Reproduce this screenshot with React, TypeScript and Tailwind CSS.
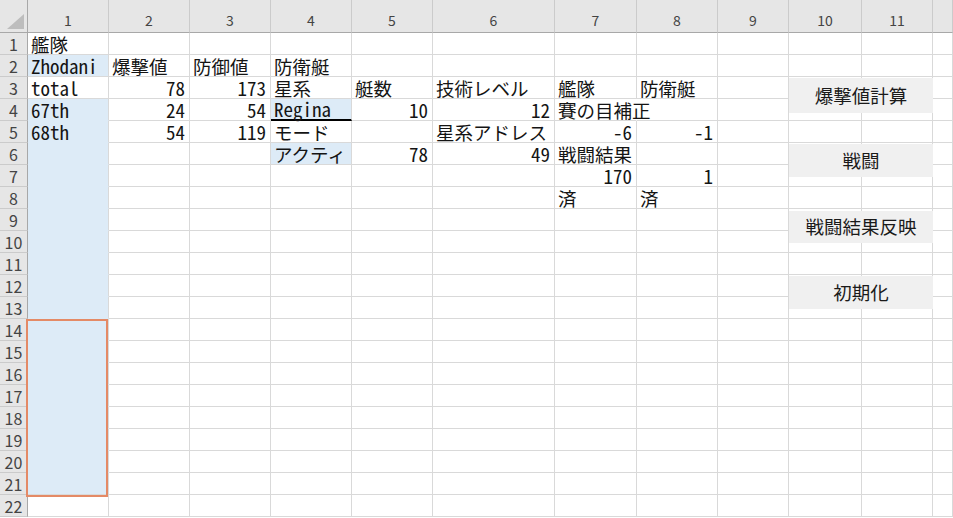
import React from "react";

type Cell = {
  t: string;
  num?: boolean;
  jp?: boolean;
  blue?: boolean;
  under?: boolean;
  spill?: boolean;
};

const COLS = 12;
const ROWS = 22;

// sheet contents, keyed "row,col"
const cells: Record<string, Cell> = {
  "1,1": { t: "艦隊", jp: true },
  "2,1": { t: "Zhodani" },
  "2,2": { t: "爆撃値", jp: true },
  "2,3": { t: "防御値", jp: true },
  "2,4": { t: "防衛艇", jp: true },
  "3,1": { t: "total" },
  "3,2": { t: "78", num: true },
  "3,3": { t: "173", num: true },
  "3,4": { t: "星系", jp: true },
  "3,5": { t: "艇数", jp: true },
  "3,6": { t: "技術レベル", jp: true },
  "3,7": { t: "艦隊", jp: true },
  "3,8": { t: "防衛艇", jp: true },
  "4,1": { t: "67th" },
  "4,2": { t: "24", num: true },
  "4,3": { t: "54", num: true },
  "4,4": { t: "Regina", blue: true, under: true },
  "4,5": { t: "10", num: true },
  "4,6": { t: "12", num: true },
  "4,7": { t: "賽の目補正", jp: true, spill: true },
  "5,1": { t: "68th" },
  "5,2": { t: "54", num: true },
  "5,3": { t: "119", num: true },
  "5,4": { t: "モード", jp: true },
  "5,6": { t: "星系アドレス", jp: true },
  "5,7": { t: "-6", num: true },
  "5,8": { t: "-1", num: true },
  "6,4": { t: "アクティ", jp: true, blue: true },
  "6,5": { t: "78", num: true },
  "6,6": { t: "49", num: true },
  "6,7": { t: "戦闘結果", jp: true },
  "7,7": { t: "170", num: true },
  "7,8": { t: "1", num: true },
  "8,7": { t: "済", jp: true },
  "8,8": { t: "済", jp: true },
};

const buttons = [
  { label: "爆撃値計算", top: "top-[78px]", h: "h-[35px]" },
  { label: "戦闘", top: "top-[144px]", h: "h-[33px]" },
  { label: "戦闘結果反映", top: "top-[211px]", h: "h-[32px]" },
  { label: "初期化", top: "top-[276px]", h: "h-[33px]" },
];

// column 1 is filled light blue on rows 2 and 4..21
const isBlueCol1 = (r: number, c: number) => c === 1 && r >= 2 && r <= 21 && r !== 3;

function getCell(r: number, c: number): Cell | undefined {
  const cell = cells[`${r},${c}`];
  if (isBlueCol1(r, c)) return { t: "", ...cell, blue: true };
  return cell;
}

function SheetCell({ r, c }: { r: number; c: number }) {
  const cell = getCell(r, c);
  const blueJoin = isBlueCol1(r, c) && isBlueCol1(r + 1, c);

  return (
    <div
      className={[
        "relative flex items-end whitespace-nowrap border-r border-b",
        cell?.spill ? "border-r-transparent z-10" : "border-r-[#d9d9d9]",
        blueJoin ? "border-b-[#ddebf7]" : "border-b-[#d9d9d9]",
        cell?.under ? "border-b-2 border-b-black" : "",
        cell?.blue ? "bg-[#ddebf7]" : "",
        cell?.num ? "justify-end pr-[4px]" : "pl-[3px]",
      ].join(" ")}
    >
      {cell && cell.t && (
        <span
          className={
            cell.jp
              ? "font-['Noto_Sans_CJK_JP',sans-serif] text-[18.5px] leading-[20px] text-[#141414]"
              : "font-['Noto_Sans_CJK_JP',sans-serif] text-[19px] leading-[20px] text-[#141414] [font-feature-settings:'hwid']"
          }
        >
          {cell.t}
        </span>
      )}
    </div>
  );
}

export default function App() {
  const rows = Array.from({ length: ROWS }, (_, i) => i + 1);
  const cols = Array.from({ length: COLS }, (_, i) => i + 1);

  return (
    <div className="relative w-[953px] h-[518px] overflow-hidden bg-white">
      <div className="grid grid-cols-[28px_81px_81px_81px_81px_81px_122px_82px_81px_71px_73px_71px_1fr] grid-rows-[33px_repeat(22,22px)]">
        {/* corner */}
        <div className="relative bg-[#e6e6e6] border-r border-b border-[#a8a8a8]">
          <svg className="absolute right-[3px] bottom-[3px]" width="17" height="15" viewBox="0 0 17 15">
            <polygon points="17,0 17,15 0,15" fill="#bdbdbd" />
          </svg>
        </div>
        {/* column headers */}
        {cols.map((c) => (
          <div
            key={`h${c}`}
            className="flex items-center justify-center pt-[9px] bg-[#e6e6e6] border-r border-r-[#cbcbcb] border-b border-b-[#a8a8a8] font-['Noto_Sans_CJK_JP',sans-serif] text-[14px] text-[#444]"
          >
            {c <= 11 ? c : ""}
          </div>
        ))}
        {rows.map((r) => (
          <React.Fragment key={r}>
            <div className="flex items-center justify-center bg-[#e6e6e6] border-r border-r-[#a8a8a8] border-b border-b-[#cbcbcb] font-['Noto_Sans_CJK_JP',sans-serif] text-[16px] leading-none text-[#444]">
              {r}
            </div>
            {cols.map((c) => (
              <SheetCell key={c} r={r} c={c} />
            ))}
          </React.Fragment>
        ))}
      </div>

      {/* selection range */}
      <div className="absolute left-[26px] top-[319px] w-[82px] h-[178px] border-2 border-[#e48a66] pointer-events-none" />

      {/* macro buttons placed on the sheet */}
      {buttons.map((b) => (
        <div
          key={b.label}
          className={`absolute left-[789px] w-[144px] ${b.top} ${b.h} flex items-center justify-center bg-[#f0f0f0] font-['Noto_Sans_CJK_JP',sans-serif] text-[18.5px] text-[#1a1a1a]`}
        >
          {b.label}
        </div>
      ))}
    </div>
  );
}
